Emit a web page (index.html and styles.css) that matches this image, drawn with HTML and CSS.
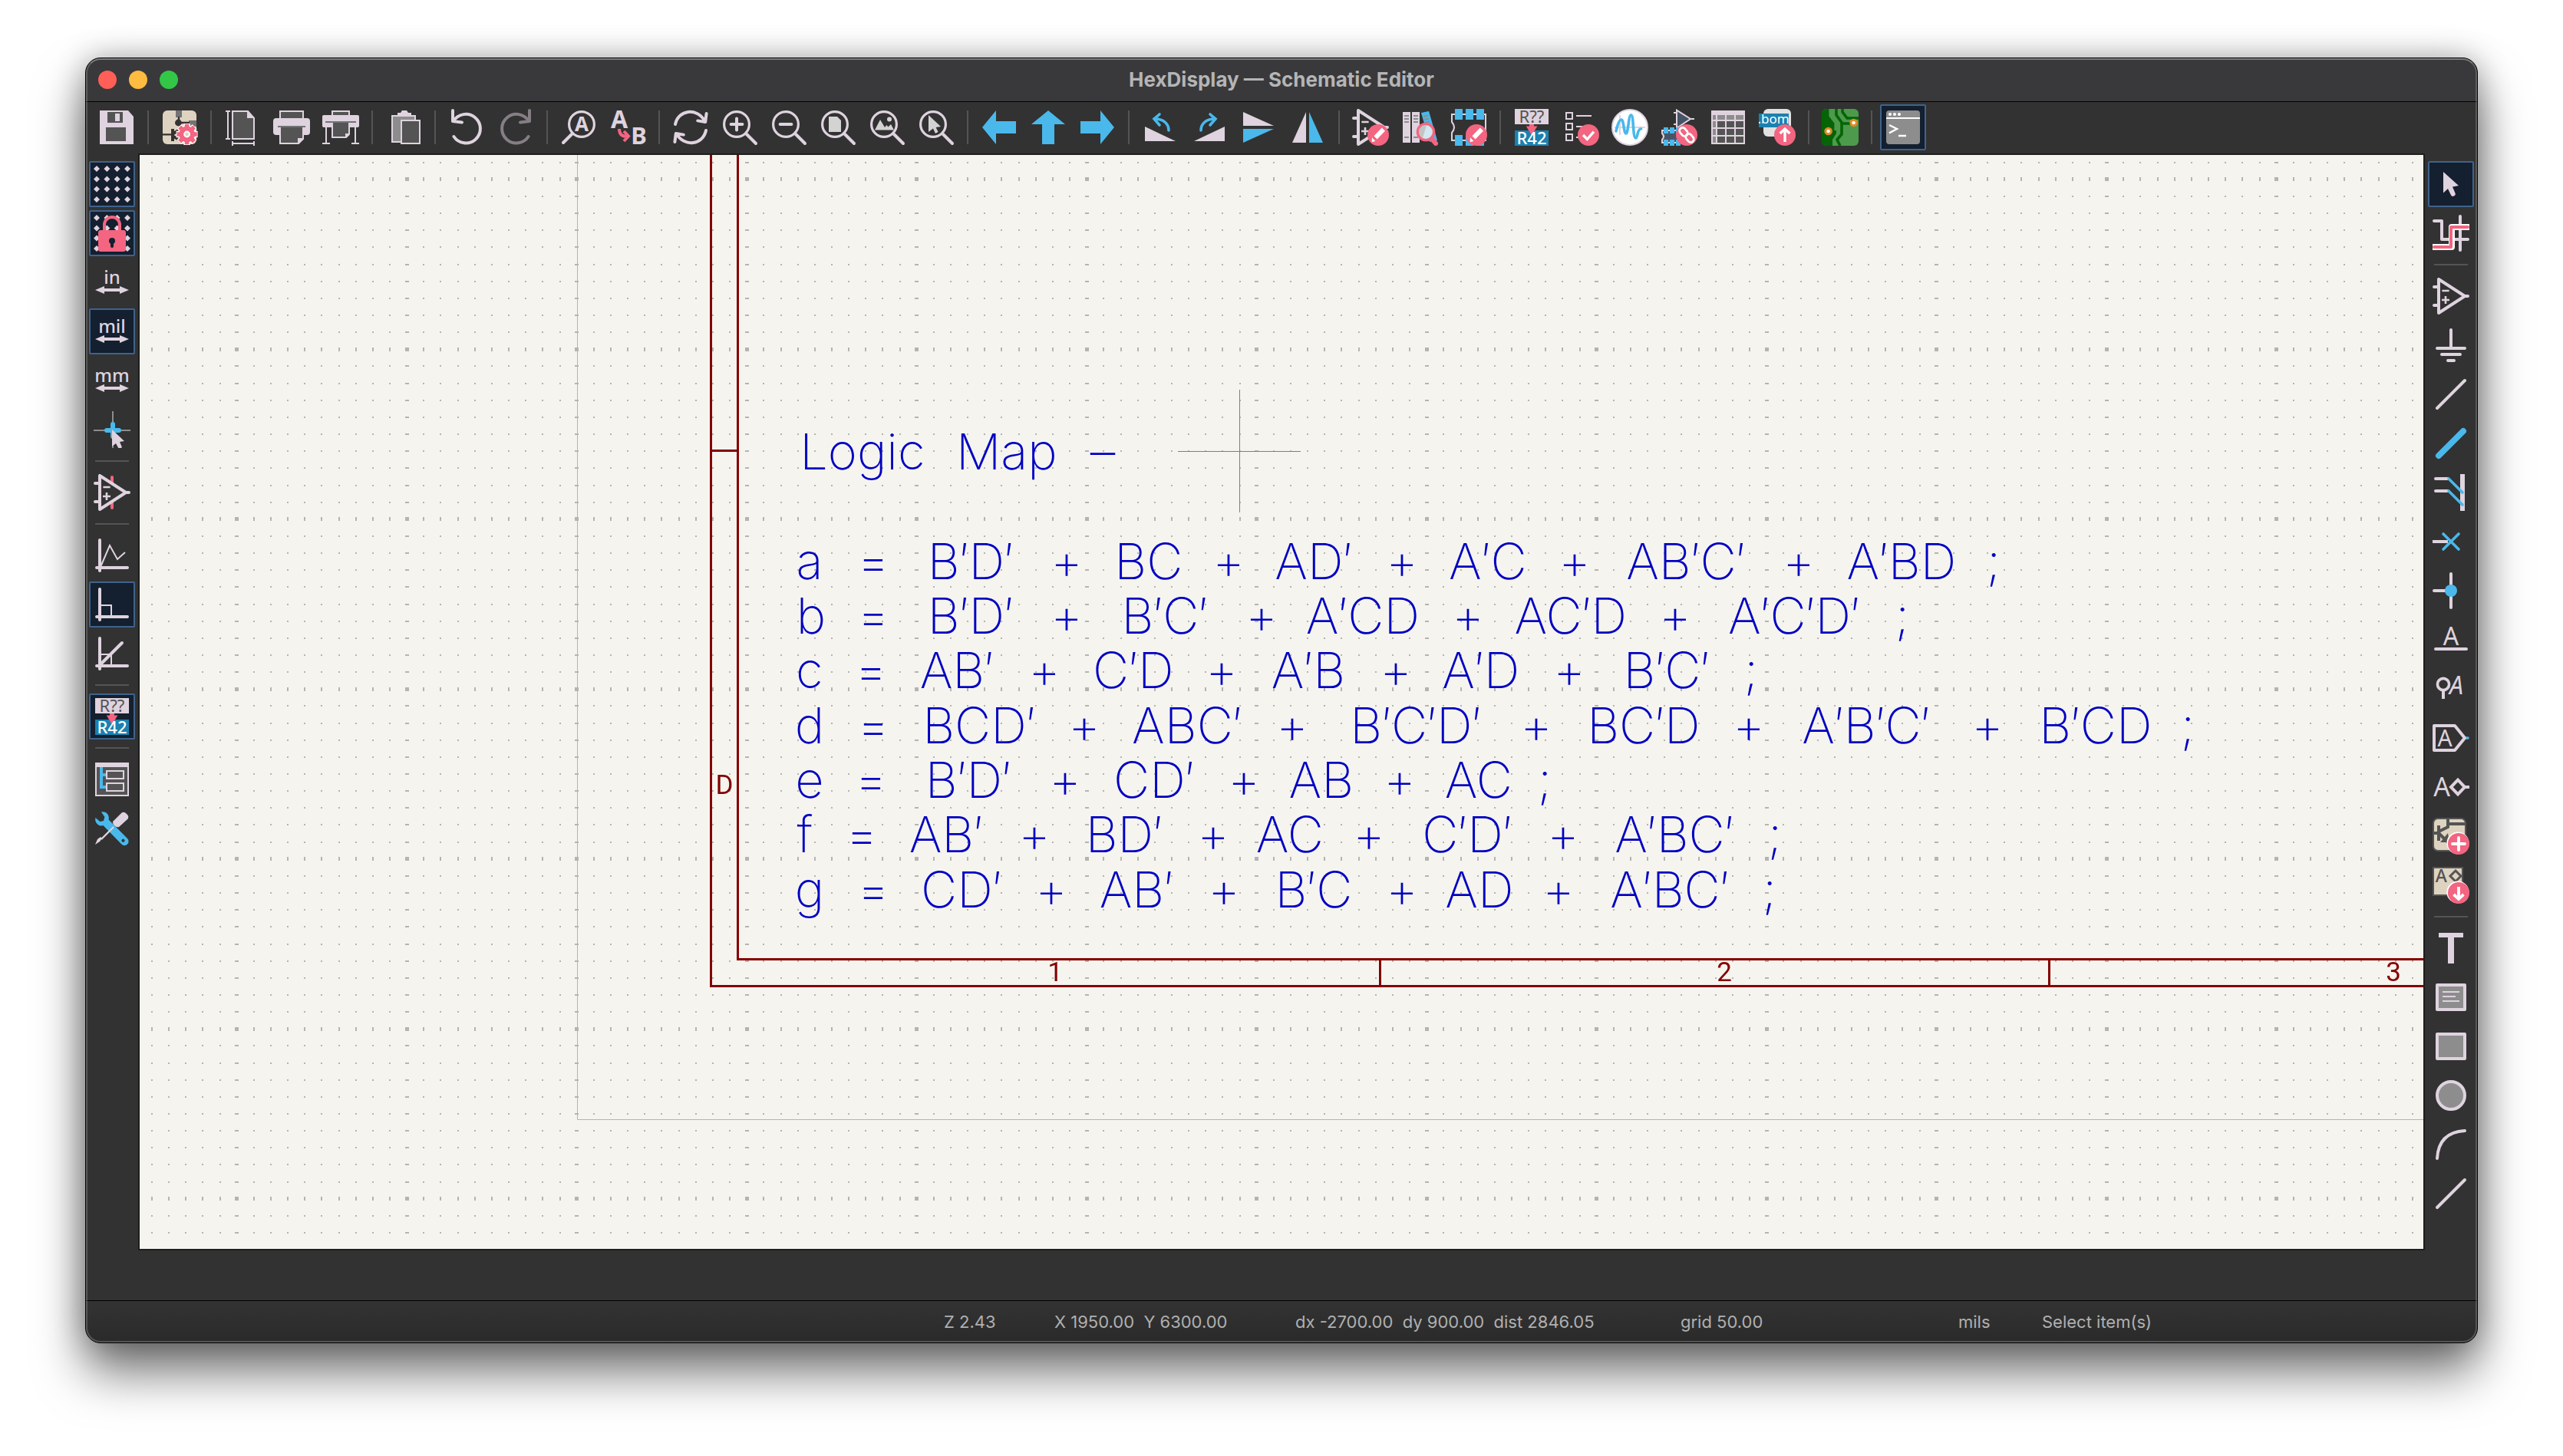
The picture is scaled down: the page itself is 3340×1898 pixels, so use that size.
FILE: index.html
```html
<!DOCTYPE html>
<html lang="en">
<head>
<meta charset="utf-8">
<title>HexDisplay — Schematic Editor</title>
<link rel="stylesheet" href="styles.css">
</head>
<body>
<svg class="sprites" aria-hidden="true">
  <symbol id="opamp" viewBox="0 0 24 24"><path class="s2" d="M4 1v22L21 12zM1 6h3M1 18h3M21 12h2"/><path class="s1" d="M6.2 8.5h4.6M6 14.5h5M8.5 12v5" stroke-width="1.3"/></symbol>
  <symbol id="badge" viewBox="0 0 24 24"><circle class="pink" cx="17" cy="17" r="7"/></symbol>
  <symbol id="edit" viewBox="0 0 24 24"><use href="#badge"/><path fill="#fff" d="M14.2 17.6l5.2-5.3 2.1 2.1-5.2 5.4zM13 18.6l2.2 2.4-2.4.6z"/></symbol>
  <symbol id="lens" viewBox="0 0 24 24"><circle class="s1" cx="10" cy="10" r="8.2" stroke-width="1.6"/><path class="s2" d="M16.5 16.5l6 6"/></symbol>
  <symbol id="annotate" viewBox="0 0 24 24"><path class="lt" d="M1 0h22v10H1z"/><path class="teal" d="M1 14h22v10H1z"/><text class="g dk" x="12" y="9.2" font-size="11" text-anchor="middle">R??</text><path class="pink" d="M10.5 10h3v1.2h2.2L12 17.2 8.400 11.200h2.100z"/><text class="g wh semi" x="12" y="23" font-size="11" text-anchor="middle">R42</text></symbol>
  <symbol id="wire" viewBox="0 0 24 24"><path class="s2" d="M3 21L21 3"/></symbol>
  <symbol id="cursor" viewBox="0 0 24 24"><path class="lt" d="M7 4l10 9-4 .8 1.700 3.900a1.500 1.500 0 0 1-2.800 1.300L10 15l-3 2.700z"/></symbol>
  <symbol id="axes" viewBox="0 0 24 24"><path class="s2" d="M4 2v20M2 20h20"/></symbol>
  <symbol id="dots" viewBox="0 0 24 24"><path class="lt" d="M2 0l2 2-2 2-2-2zM8.700 0l2 2-2 2-2-2zM15.300 0l2 2-2 2-2-2zM22 0l2 2-2 2-2-2zM2 6.700l2 2-2 2-2-2zM8.700 6.700l2 2-2 2-2-2zM15.300 6.700l2 2-2 2-2-2zM22 6.700l2 2-2 2-2-2zM2 13.300l2 2-2 2-2-2zM8.700 13.300l2 2-2 2-2-2zM15.300 13.300l2 2-2 2-2-2zM22 13.300l2 2-2 2-2-2zM2 20l2 2-2 2-2-2zM8.700 20l2 2-2 2-2-2zM15.300 20l2 2-2 2-2-2zM22 20l2 2-2 2-2-2z"/></symbol>
  <symbol id="units" viewBox="0 0 24 24"><path class="lt" d="M1 17l6-2.500V16h10v-1.500l6 2.500-6 2.500V18H7v1.500z"/></symbol>
</svg>

<main class="window">
  <header class="titlebar">
    <div class="lights"><button class="light close" aria-label="Close"></button><button class="light minimise" aria-label="Minimise"></button><button class="light zoom" aria-label="Zoom"></button></div>
    <h1>HexDisplay — Schematic Editor</h1>
  </header>

  <nav class="toolbar top" aria-label="Main toolbar">
    <button aria-label="Save"><svg viewBox="0 0 24 24"><path class="lt" d="M1 1h18.500L23 5v18H1z"/><path class="dkf" d="M6 2h10v7H6zM5 12h13v9H5z"/><path class="lt" d="M11 3h3v5h-3z"/></svg></button>
    <span class="sep"></span>
    <button aria-label="Schematic setup"><svg viewBox="0 0 24 24"><rect class="tan" x="1" y="1" width="22" height="22" rx="3"/><path fill="#737373" d="M9.500 1h4v4.500h-4zM18 7.500h5v4h-5z"/><path d="M11.500 5v4M11.500 9h7M1 16.700h6" stroke="#333" stroke-width="1.200"/><circle cx="11.200" cy="9" r="2.200" fill="#333"/><path d="M7.500 13v8M8 16l5-3M8 18l4 2" stroke="#333" stroke-width="2"/><g transform="translate(16.800 16.500)"><path d="M0-7V7M-7 0H7M-5-5L5 5M5-5L-5 5" stroke="#fff" stroke-width="4.200"/><circle r="5.900" fill="#fff"/><path d="M0-6.600V6.600M-6.600 0H6.600M-4.700-4.700L4.700 4.700M4.700-4.700L-4.700 4.700" stroke="#f36580" stroke-width="2.800"/><circle r="5.200" fill="#f36580"/><circle r="1.700" fill="#ded3c0" stroke="#fff"/></g></svg></button>
    <span class="sep"></span>
    <button aria-label="Page settings"><svg viewBox="0 0 24 24"><path class="box" d="M5.500 1.500h10l4 4.500v13.500h-14z"/><path class="lt" d="M15 1l5 5h-5zM1 1h3v1H3v17h1v1H1v-1h1V2H1zM5 21h1v1h13v-1h1v3h-1v-1H6v1H5z"/></svg></button>
    <button aria-label="Print"><svg viewBox="0 0 24 24"><path class="box" d="M4.500 1.500h15v6h-15z"/><rect class="lt" y="6" width="24" height="11" rx="2"/><path class="box" d="M4.500 11.500h15v8l-3 3h-12z"/><path fill="#737373" d="M3 11h18v1H3z"/><path class="lt" d="M16 23v-4h4z"/></svg></button>
    <button aria-label="Plot"><svg viewBox="0 0 24 24"><path class="box" d="M6.500 1.500h11v4h-11z"/><rect class="lt" y="4" width="24" height="8" rx="1"/><path class="box" d="M6.500 8.500h11v8l-2 2h-9z"/><path fill="#737373" d="M2 8h20v1H2z"/><path class="lt" d="M15 19v-3h3zM2 12h1v10h2v1H0v-1h2zM21 12h1v10h2v1h-5v-1h2z"/></svg></button>
    <span class="sep"></span>
    <button aria-label="Paste"><svg viewBox="0 0 24 24"><path class="box gray" d="M4.500 4.500h15v17h-15z"/><path class="lt" d="M8 4V2.500h2L11 1h3l1 1.500h2V4z"/><path class="box" d="M10.500 7.500h12v15h-12z"/></svg></button>
    <span class="sep"></span>
    <button aria-label="Undo"><svg viewBox="0 0 24 24"><path class="s2" stroke-width="1.800" d="M3.700 18A9.400 9.400 0 1 0 3.500 8M3 1v7l6 .7" /></svg></button>
    <button aria-label="Redo" disabled><svg viewBox="0 0 24 24"><path class="s2 off" d="M20.300 18A9.400 9.400 0 1 1 20.500 8M21 1v7l-6 .7"/></svg></button>
    <span class="sep"></span>
    <button aria-label="Find"><svg viewBox="0 0 24 24"><circle class="s1" cx="14" cy="10" r="8.200" stroke-width="1.600"/><path class="s2" d="M8 16l-6 6"/><text class="g ltt bold" x="14" y="14.500" font-size="13" text-anchor="middle">A</text></svg></button>
    <button aria-label="Find and replace"><svg viewBox="0 0 24 24"><text class="g ltt bold" x="6.500" y="12.500" font-size="16" text-anchor="middle">A</text><text class="g ltt bold" x="19.300" y="23" font-size="15.500" text-anchor="middle">B</text><path d="M6.500 13q0 5 5 5M9.500 14.500l3 3.300-3 3.200" fill="none" stroke="#f36580" stroke-width="2"/></svg></button>
    <span class="sep"></span>
    <button aria-label="Refresh"><svg viewBox="0 0 24 24"><path class="s2" stroke-width="1.800" d="M2 10C4 .500 16-1 21 7.500M22.300 3l-.700 5.500-5-.800M22 14c-2 9.500-14 11-19 2.500M1.700 21.500l.700-5.500 5 .800"/></svg></button>
    <button aria-label="Zoom in"><svg viewBox="0 0 24 24"><use href="#lens"/><path class="s2" d="M10 6.300v7.400M6.300 10h7.400"/></svg></button>
    <button aria-label="Zoom out"><svg viewBox="0 0 24 24"><use href="#lens"/><path class="s2" d="M6.300 10h7.400"/></svg></button>
    <button aria-label="Zoom to page"><svg viewBox="0 0 24 24"><use href="#lens"/><path fill="#d3d3d3" d="M6 5h5.500L14 7.500V15H6z"/></svg></button>
    <button aria-label="Zoom to objects"><svg viewBox="0 0 24 24"><use href="#lens"/><path fill="#d3d3d3" d="M4 13.700L7.500 7l3 5 1.200-1.500 1 1.200 1.800-1.700 2 3.700z"/><circle cx="13.500" cy="6.700" r="1.500" fill="#d3d3d3"/></svg></button>
    <button aria-label="Zoom to selection"><svg viewBox="0 0 24 24"><use href="#lens"/><path fill="#d3d3d3" d="M7 4l8 7.500-3.200.5 1.500 3-1.800 1L10 12.700 7 15z"/></svg></button>
    <span class="sep"></span>
    <button aria-label="Navigate back"><svg viewBox="0 0 24 24"><path class="blue" d="M1 12l9-11v7h13v8H10v7z"/></svg></button>
    <button aria-label="Navigate up"><svg viewBox="0 0 24 24"><path class="blue" d="M12 1l11 9h-7v13H8V10H1z"/></svg></button>
    <button aria-label="Navigate forward"><svg viewBox="0 0 24 24"><path class="blue" d="M23 12L14 1v7H1v8h13v7z"/></svg></button>
    <span class="sep"></span>
    <button aria-label="Rotate counter-clockwise"><svg viewBox="0 0 24 24"><path class="lt" d="M2 11.500L22 21H2z"/><path class="b2" d="M17.500 14c0-4-3-7.500-9-7.500M11.500 3.500l-3.500 3 3.500 4"/></svg></button>
    <button aria-label="Rotate clockwise"><svg viewBox="0 0 24 24"><path class="lt" d="M22 11.500L2 21h20z"/><path class="b2" d="M6.500 14c0-4 3-7.500 9-7.500M12.500 3.500l3.500 3-3.500 4"/></svg></button>
    <button aria-label="Mirror vertically"><svg viewBox="0 0 24 24"><path class="lt" d="M2 2l20 9H2z"/><path class="blue" d="M2 13h20L2 22z"/></svg></button>
    <button aria-label="Mirror horizontally"><svg viewBox="0 0 24 24"><path class="lt" d="M11 2v20H2z"/><path class="blue" d="M13 2v20h9z"/></svg></button>
    <span class="sep"></span>
    <button aria-label="Symbol editor"><svg viewBox="0 0 24 24"><use href="#opamp"/><use href="#edit"/></svg></button>
    <button aria-label="Symbol library browser"><svg viewBox="0 0 24 24"><path class="lt" d="M1 2h5v20H1zM7 2h5v20H7z"/><path class="blue" d="M13 2.500l5-1 5.500 19-5 1z"/><path d="M2 4.500h3M2 6.500h3M2 8.500h3M2 18.500h3M8 4.500h3M8 6.500h3M8 8.500h3M8 18.500h3M14.500 5l3-.8M15 7l3-.8M15.500 9l3-.8" stroke="#8d8d8d"/><circle cx="16" cy="15" r="5.300" fill="#d0e8f2" stroke="#f36580" stroke-width="1.700"/><path fill="#c4c4c4" d="M16.500 10.600a4.400 4.400 0 0 0-2.500 8.300z"/><path d="M20 19.500l2.500 3" stroke="#f36580" stroke-width="3" stroke-linecap="round"/></svg></button>
    <button aria-label="Footprint editor"><svg viewBox="0 0 24 24"><path class="s1" d="M1 3.500h22v17H1v-5q3-3.500 0-7z"/><path class="blue" d="M3 0h5v7H3zM10 0h5v7h-5zM17 0h5v7h-5zM3 17h5v7H3zM10 17h5v7h-5zM17 17h5v7h-5z"/><use href="#edit"/></svg></button>
    <span class="sep"></span>
    <button aria-label="Annotate"><svg viewBox="0 0 24 24"><use href="#annotate"/></svg></button>
    <button aria-label="Electrical rules checker"><svg viewBox="0 0 24 24"><path class="s1" d="M2.500 2.500h4v4h-4zM2.500 9.500h4v4h-4zM2.500 16.500h4v4h-4zM9 4.500h10M9 11.500h9M9 18.500h5"/><use href="#badge"/><path d="M13.500 17l2.700 2.800 4.300-5" fill="none" stroke="#fff" stroke-width="1.700"/></svg></button>
    <button aria-label="Simulator"><svg viewBox="0 0 24 24"><circle cx="12" cy="12" r="11.500" fill="#fff" stroke="#ded3de"/><path d="M5.500 4v13M2 12h20" stroke="#ded3de"/><path class="b2" stroke-width="1.300" d="M3 14.500C4 10 5 7 6.500 7s1.500 9 3 9S11 4 12.800 4s1 15 3 15c1.500 0 .7-6 3.500-6"/></svg></button>
    <button aria-label="Assign footprints"><svg viewBox="0 0 24 24"><path d="M10.500.8v11.700L19.500 6.500zM8.500 2.500h2M8.500 10h2M19 6.500h3" fill="#475468" stroke="#ded3de"/><path d="M1 14h12v8H1v-2q2-2 0-4z" fill="#475468" stroke="#ded3de"/><path class="blue" d="M2 12h3v4H2zM6 12h3v4H6zM10 12h3v4h-3zM2 20h3v4H2zM6 20h3v4H6zM10 20h3v4h-3z"/><use href="#badge"/><g fill="none" stroke="#fff" stroke-width="1.400"><rect x="13" y="12" width="4" height="6" rx="2" transform="rotate(-40 15 15)"/><rect x="17" y="16" width="4" height="6" rx="2" transform="rotate(-40 19 19)"/></g></svg></button>
    <button aria-label="Symbol fields table"><svg viewBox="0 0 24 24"><path class="lt" d="M1 1h22v22H1z"/><path fill="#8d8d8d" d="M2 4h2v3H2zM5 4h5v3H5zM11 4h5v3h-5zM17 4h5v3h-5zM2 8h2v4H2zM2 13h2v4H2zM2 18h2v4H2z"/><path class="dkf" d="M5 8h5v4H5zM11 8h5v4h-5zM17 8h5v4h-5zM5 13h5v4H5zM11 13h5v4h-5zM17 13h5v4h-5zM5 18h5v4H5zM11 18h5v4h-5zM17 18h5v4h-5z"/></svg></button>
    <button aria-label="Generate bill of materials"><svg viewBox="0 0 24 24"><rect x="3" width="18" height="18" rx="3" fill="#e1e1e1"/><path class="teal" d="M0 3h19.500v9H0z"/><text class="g wh" x="9.500" y="9.700" font-size="8.500" text-anchor="middle">.bom</text><use href="#badge"/><path d="M17 21.500v-8M13.800 16l3.200-3 3.200 3" fill="none" stroke="#fff" stroke-width="1.700"/></svg></button>
    <span class="sep"></span>
    <button aria-label="Open PCB editor"><svg viewBox="0 0 24 24"><rect width="24" height="24" rx="3" fill="#4d9a4d"/><path fill="#056405" d="M3 0h2.500v5l4 5v6L7 20v4H3q-3 0-3-3V3q0-3 3-3z"/><path d="M9.500 0v4l4 5.500h7M13.500 0v2l3 4H24M12 24l-2-4 3-3.500V9" fill="none" stroke="#056405" stroke-width="1.800"/><path d="M5.500 0v4.500L9 9v5" fill="none" stroke="#4d9a4d" stroke-width="1.600"/><g fill="#fff" stroke="#df8b28" stroke-width="1.500"><circle cx="4.300" cy="14.500" r="1.900"/><circle cx="20.800" cy="9" r="1.900"/></g></svg></button>
    <span class="sep"></span>
    <button class="on" aria-label="Scripting console"><svg viewBox="0 0 24 24"><rect x="1" y="1" width="22" height="22" rx="2" fill="#8d8d8d"/><path fill="#fff" d="M1 5.500h22v1H1z"/><g fill="#fff"><circle cx="3.500" cy="3.500" r="1"/><circle cx="6.500" cy="3.500" r="1"/><circle cx="9.500" cy="3.500" r="1"/></g><path d="M3 10.500l5 2.500-5 2.700M9 17.500h5" fill="none" stroke="#fff" stroke-width="1.200"/></svg></button>
  </nav>

  <div class="work">
    <nav class="toolbar side" aria-label="Options toolbar">
      <button class="on" aria-label="Show grid"><svg viewBox="0 0 24 24"><use href="#dots"/></svg></button>
      <button class="on" aria-label="Grid overrides"><svg viewBox="0 0 24 24"><use href="#dots"/><path d="M7 11V6.500a5 5 0 0 1 10 0V11" fill="none" stroke="#f36580" stroke-width="2"/><rect class="pink" x="3" y="10" width="18" height="14" rx="1.500"/><circle cx="12" cy="17" r="2" fill="#141f2f"/><path d="M12 18v2.500" stroke="#141f2f" stroke-width="2" stroke-linecap="round"/></svg></button>
      <button aria-label="Inches"><svg viewBox="0 0 24 24"><text class="g ltt semi" x="12" y="13" font-size="12" text-anchor="middle">in</text><use href="#units"/></svg></button>
      <button class="on" aria-label="Mils"><svg viewBox="0 0 24 24"><text class="g ltt semi" x="12" y="13" font-size="12" text-anchor="middle">mil</text><use href="#units"/></svg></button>
      <button aria-label="Millimetres"><svg viewBox="0 0 24 24"><text class="g ltt semi" x="12" y="13" font-size="12" text-anchor="middle">mm</text><use href="#units"/></svg></button>
      <button aria-label="Full-window crosshair"><svg viewBox="0 0 24 24"><path d="M12.500 0v24M0 12.500h24" stroke="#8d8d8d"/><path d="M12.500 8.500v8M8.500 12.500h8" stroke="#4ab8eb" stroke-width="3" stroke-linecap="round"/><path class="lt" d="M12 12l8 7.500-3 .5 1.200 2.700a1.200 1.200 0 0 1-2.200 1L14.500 21 12 23z"/></svg></button>
      <span class="sep"></span>
      <button aria-label="Show hidden pins"><svg viewBox="0 0 24 24"><path d="M12 2v20" stroke="#f36580" stroke-width="2" stroke-linecap="round"/><path d="M4 1l17 11L4 23z" fill="#333"/><use href="#opamp"/></svg></button>
      <span class="sep"></span>
      <button aria-label="Free angle lines"><svg viewBox="0 0 24 24"><use href="#axes"/><path class="s1" d="M4.500 19.500l6-14 5 9L20.500 10"/></svg></button>
      <button class="on" aria-label="Right angle lines"><svg viewBox="0 0 24 24"><path class="s1" d="M4 12.500h7.500V20"/><use href="#axes"/></svg></button>
      <button aria-label="45 degree lines"><svg viewBox="0 0 24 24"><path class="s1" d="M4 12.500h7.500V20"/><use href="#axes"/><path class="s2" d="M4.500 19L18.500 5"/></svg></button>
      <span class="sep"></span>
      <button class="on" aria-label="Annotate automatically"><svg viewBox="0 0 24 24"><use href="#annotate"/></svg></button>
      <span class="sep"></span>
      <button aria-label="Hierarchy navigator"><svg viewBox="0 0 24 24"><path class="box" d="M1.500 1.500h21v21h-21z"/><path class="lt" d="M1 1h22v3H1z"/><path d="M5 4v14M4 9h4M4 17h4" stroke="#4ab8eb" stroke-width="2"/><path class="box" d="M8.500 6.500h11v5h-11zM8.500 14.500h11v5h-11z"/></svg></button>
      <button aria-label="Properties"><svg viewBox="0 0 24 24"><path class="blue" fill-rule="evenodd" d="M5 1.200C8 .5 10.500 3 9.800 6.200L22 18.500a2.600 2.600 0 0 1-3.800 3.800L6.200 10C3 11 .5 8 1.200 5l3 2.500L6.500 7l.7-2.500zM20 20.500a1 1 0 1 0-1.500 0 1 1 0 0 0 1.500 0z"/><path d="M13 11L5 19" stroke="#ded3de" stroke-width="1.200"/><path class="lt" d="M1 22.500l1.500-3.500 2-1.500 1 1-1.500 2zM12.500 7.500l5.800-5.800q1.700-1 3.200.8 1.800 1.500.8 3.200l-5.800 5.300q-1.500.5-2.800-.7-1.400-1.300-1.200-2.800z"/></svg></button>
    </nav>

    <section class="sheet" aria-label="Schematic">
      <canvas class="grid"></canvas>
      <svg class="drawing">
        <path class="edge" d="M570.500 0v1257.500h9000"/>
        <path class="frame" d="M744.500 0v1083.500h9000M779.500 0v1048.500h9000M744.500 385.500h35M1616.500 1048.500v35M2488.500 1048.500v35"/>
        <g class="zone"><text x="762" y="833">D</text><text x="1193" y="1077">1</text><text x="2065" y="1077">2</text><text x="2937" y="1077">3</text></g>
        <g class="note">
          <text y="410"><tspan x="951">Logic</tspan> <tspan x="1139">Map</tspan> <tspan x="1255">–</tspan></text>
          <text y="553"><tspan x="882">a</tspan> <tspan x="965">=</tspan> <tspan x="1092">B′D′</tspan> <tspan x="1217">+</tspan> <tspan x="1324">BC</tspan> <tspan x="1428">+</tspan> <tspan x="1539">AD′</tspan> <tspan x="1654">+</tspan> <tspan x="1766">A′C</tspan> <tspan x="1879">+</tspan> <tspan x="2024">AB′C′</tspan> <tspan x="2171">+</tspan> <tspan x="2305">A′BD</tspan> <tspan x="2416">;</tspan></text>
          <text y="624"><tspan x="884">b</tspan> <tspan x="965">=</tspan> <tspan x="1092">B′D′</tspan> <tspan x="1217">+</tspan> <tspan x="1345">B′C′</tspan> <tspan x="1471">+</tspan> <tspan x="1603">A′CD</tspan> <tspan x="1740">+</tspan> <tspan x="1874">AC′D</tspan> <tspan x="2010">+</tspan> <tspan x="2165">A′C′D′</tspan> <tspan x="2297">;</tspan></text>
          <text y="695"><tspan x="882">c</tspan> <tspan x="962">=</tspan> <tspan x="1074">AB′</tspan> <tspan x="1188">+</tspan> <tspan x="1304">C′D</tspan> <tspan x="1419">+</tspan> <tspan x="1532">A′B</tspan> <tspan x="1646">+</tspan> <tspan x="1757">A′D</tspan> <tspan x="1872">+</tspan> <tspan x="1999">B′C′</tspan> <tspan x="2100">;</tspan></text>
          <text y="767"><tspan x="882">d</tspan> <tspan x="965">=</tspan> <tspan x="1103">BCD′</tspan> <tspan x="1240">+</tspan> <tspan x="1374">ABC′</tspan> <tspan x="1511">+</tspan> <tspan x="1672">B′C′D′</tspan> <tspan x="1829">+</tspan> <tspan x="1969">BC′D</tspan> <tspan x="2106">+</tspan> <tspan x="2259">A′B′C′</tspan> <tspan x="2417">+</tspan> <tspan x="2558">B′CD</tspan> <tspan x="2669">;</tspan></text>
          <text y="838"><tspan x="882">e</tspan> <tspan x="962">=</tspan> <tspan x="1089">B′D′</tspan> <tspan x="1215">+</tspan> <tspan x="1331">CD′</tspan> <tspan x="1448">+</tspan> <tspan x="1549">AB</tspan> <tspan x="1651">+</tspan> <tspan x="1754">AC</tspan> <tspan x="1831">;</tspan></text>
          <text y="909"><tspan x="876">f</tspan> <tspan x="950">=</tspan> <tspan x="1060">AB′</tspan> <tspan x="1175">+</tspan> <tspan x="1292">BD′</tspan> <tspan x="1408">+</tspan> <tspan x="1508">AC</tspan> <tspan x="1611">+</tspan> <tspan x="1739">C′D′</tspan> <tspan x="1864">+</tspan> <tspan x="2009">A′BC′</tspan> <tspan x="2131">;</tspan></text>
          <text y="981"><tspan x="882">g</tspan> <tspan x="965">=</tspan> <tspan x="1080">CD′</tspan> <tspan x="1197">+</tspan> <tspan x="1308">AB′</tspan> <tspan x="1422">+</tspan> <tspan x="1539">B′C</tspan> <tspan x="1654">+</tspan> <tspan x="1755">AD</tspan> <tspan x="1858">+</tspan> <tspan x="2003">A′BC′</tspan> <tspan x="2124">;</tspan></text>
        </g>
        <path class="crosshair" d="M1433.500 306v160M1353 386.500h160"/>
      </svg>
    </section>

    <nav class="toolbar side" aria-label="Drawing toolbar">
      <button class="on" aria-label="Select"><svg viewBox="0 0 24 24"><use href="#cursor"/></svg></button>
      <button aria-label="Highlight net"><svg viewBox="0 0 24 24"><path class="s2" d="M1 4h5v12h17M18 1v22"/><path d="M0 21h12.500V8H24" fill="none" stroke="#fff" stroke-width="4" stroke-linejoin="round"/><path d="M1 21h11V8h11" fill="none" stroke="#f36580" stroke-width="2" stroke-linecap="round" stroke-linejoin="round"/></svg></button>
      <span class="sep"></span>
      <button aria-label="Place symbols"><svg viewBox="0 0 24 24"><use href="#opamp"/></svg></button>
      <button aria-label="Place power"><svg viewBox="0 0 24 24"><path class="s2" d="M12 2v12M3 14h18M6 18h12M10 22h4"/></svg></button>
      <button aria-label="Draw wires"><svg viewBox="0 0 24 24"><use href="#wire"/></svg></button>
      <button aria-label="Draw buses"><svg viewBox="0 0 24 24"><path d="M4 20L20 4" stroke="#4ab8eb" stroke-width="4" stroke-linecap="round"/></svg></button>
      <button aria-label="Bus entries"><svg viewBox="0 0 24 24"><path class="s2" d="M2 3h8M2 11h8"/><path class="lt" d="M18 0h3v24h-3z"/><path class="b2" d="M10.500 3l9 9M10.500 11l9 9"/></svg></button>
      <button aria-label="No-connect flags"><svg viewBox="0 0 24 24"><path class="s2 flat" d="M0 12h10"/><path class="b2" d="M7 7l10 10M17 7L7 17"/></svg></button>
      <button aria-label="Junctions"><svg viewBox="0 0 24 24"><path class="s2" d="M12 1v22M1 12h11"/><circle class="blue" cx="12" cy="12" r="4"/></svg></button>
      <button aria-label="Net labels"><svg viewBox="0 0 24 24"><text class="g ltt" x="12" y="15.500" font-size="16" text-anchor="middle">A</text><path class="s2" d="M2 18h20"/></svg></button>
      <button aria-label="Net class directives"><svg viewBox="0 0 24 24"><circle class="s1" cx="7" cy="9" r="3.800" stroke-width="1.800"/><path class="s2 flat" d="M7 13v5.500"/><text class="g ltt italic" x="15.500" y="15.500" font-size="16" text-anchor="middle">A</text></svg></button>
      <button aria-label="Global labels"><svg viewBox="0 0 24 24"><path class="b2" d="M22 12h1"/><path class="s2" d="M1 4h13.500l6.500 8-6.500 8H1z"/><text class="g ltt" x="8" y="17.500" font-size="15" text-anchor="middle">A</text></svg></button>
      <button aria-label="Hierarchical labels"><svg viewBox="0 0 24 24"><text class="g ltt" x="6" y="18" font-size="17" text-anchor="middle">A</text><path class="s2 flat" d="M16.500 7.300l4.500 4.700-4.500 4.700L12 12zM21 12h3"/></svg></button>
      <button aria-label="Hierarchical sheets"><svg viewBox="0 0 24 24"><rect class="tan" x=".5" y=".5" width="21" height="21" rx="3" stroke="#545454"/><path d="M0 10h4M4 5v10M4 9l6-3V0M10 4h11M4 10l6 6" fill="none" stroke="#545454" stroke-width="2"/><path fill="#545454" d="M5 16h6l-1-6z"/><circle cx="16.500" cy="16.500" r="7.300" fill="#fff"/><use href="#badge"/><path d="M17 13v8M13 17h8" stroke="#fff" stroke-width="1.900" stroke-linecap="round"/></svg></button>
      <button aria-label="Import sheet pins"><svg viewBox="0 0 24 24"><path class="tan" d="M.5.500h19v18H.5z" stroke="#545454"/><text class="g dk semi" x="5.700" y="10" font-size="11.500" text-anchor="middle">A</text><path d="M15 2.500L18.500 6 15 9.500 11.500 6z" fill="none" stroke="#545454" stroke-width="1.500"/><circle cx="16.500" cy="16.500" r="7.300" fill="#fff"/><use href="#badge"/><path d="M17 13v7.500M13.800 18l3.200 3 3.200-3" fill="none" stroke="#fff" stroke-width="1.900"/></svg></button>
      <span class="sep"></span>
      <button aria-label="Text"><svg viewBox="0 0 24 24"><rect class="lt" x="4" y="2" width="16" height="3"/><rect class="lt" x="10" y="2" width="4" height="20"/></svg></button>
      <button aria-label="Text boxes"><svg viewBox="0 0 24 24"><path class="s2 gray" d="M3 4h18v16H3z"/><path class="s1" d="M6.500 8.500h11M6.500 11.500h8.500M6.500 14.500h11"/></svg></button>
      <button aria-label="Rectangles"><svg viewBox="0 0 24 24"><path class="s2 gray" d="M3 4h18v16H3z"/></svg></button>
      <button aria-label="Circles"><svg viewBox="0 0 24 24"><circle class="s2 gray" cx="12" cy="12" r="9"/></svg></button>
      <button aria-label="Arcs"><svg viewBox="0 0 24 24"><path class="s2" d="M3 21Q4 4 21 3"/></svg></button>
      <button aria-label="Lines"><svg viewBox="0 0 24 24"><use href="#wire"/></svg></button>
    </nav>
  </div>

  <div class="messages"></div>
  <footer class="status"><span></span><span>Z 2.43</span><span>X 1950.00&nbsp; Y 6300.00</span><span>dx -2700.00&nbsp; dy 900.00&nbsp; dist 2846.05</span><span>grid 50.00</span><span>mils</span><span>Select item(s)</span></footer>
</main>
<script src="grid.js"></script>
</body>
</html>
```
FILE: styles.css
```css
*, *::before, *::after { box-sizing: border-box; }

body {
  margin: 0;
  min-height: 100vh;
  padding: 75px 111px 147px;
  display: flex;
  background: #fff;
  font-family: Inter, "Liberation Sans", sans-serif;
}

.sprites { position: absolute; width: 0; height: 0; }

.window {
  position: relative;
  flex: 1;
  min-width: 0;
  display: flex;
  flex-direction: column;
  overflow: hidden;
  border: 1px solid #000;
  border-radius: 20px;
  background: #323232;
  box-shadow: 0 38px 64px rgba(0, 0, 0, .54), 0 0 40px rgba(0, 0, 0, .3);
}
.window::after {
  content: "";
  position: absolute;
  inset: 0;
  border: 2px solid rgba(255, 255, 255, .2);
  border-top-color: rgba(255, 255, 255, .35);
  border-radius: 19px;
  pointer-events: none;
}

/* Title bar */
.titlebar {
  display: grid;
  grid-template-columns: 1fr auto 1fr;
  align-items: center;
  height: 57px;
  padding: 0 16px;
  background: #39393b;
  border-bottom: 1px solid #000;
}
.lights { display: flex; gap: 16px; }
.light { width: 24px; height: 24px; padding: 0; border: 0; border-radius: 50%; }
.close { background: #ff5f57; }
.minimise { background: #febc40; }
.zoom { background: #33c748; }
h1 { margin: 0; font-size: 26px; line-height: 32px; font-weight: 700; color: #b5b5b6; }

/* Toolbars */
.toolbar { display: flex; align-items: center; gap: 4px; }
.toolbar button {
  flex: none;
  width: 60px;
  height: 60px;
  padding: 4px;
  border: 2px solid transparent;
  border-radius: 2px;
  background: none;
}
.toolbar button.on { background: #141f2f; border-color: #3f638b; }
.toolbar button svg { display: block; width: 48px; height: 48px; }
.sep { flex: none; background: #545454; }
.top { padding: 3px 10px 4px; }
.top .sep { width: 2px; height: 44px; margin: 0 6px; }
.side { flex-direction: column; padding: 10px 4px; }
.side .sep { width: 44px; height: 2px; margin: 6px 0; }

/* Icon paints */
.lt { fill: #ded3de; }
.dkf { fill: #545454; }
.pink { fill: #f36580; }
.blue { fill: #4ab8eb; }
.teal { fill: #1a81b0; }
.tan { fill: #ded3c0; }
.box { fill: #545454; stroke: #ded3de; stroke-width: 1; }
.box.gray { fill: #8d8d8d; }
.s1 { fill: none; stroke: #ded3de; }
.s2 { fill: none; stroke: #ded3de; stroke-width: 2; stroke-linecap: round; stroke-linejoin: round; }
.s2.gray { fill: #8d8d8d; }
.s2.off { stroke: #857f85; }
.s2.flat { stroke-linecap: butt; stroke-linejoin: miter; }
.b2 { fill: none; stroke: #4ab8eb; stroke-width: 1.8; stroke-linecap: round; }
.g { font-family: "Noto Sans", sans-serif; }
.ltt { fill: #ded3de; }
.dk { fill: #545454; }
.wh { fill: #fff; }
.semi { font-weight: 500; }
.bold { font-weight: 700; }
.italic { font-style: italic; }

/* Drawing area */
.work { flex: 1; display: grid; grid-template-columns: 68px minmax(0, 1fr) 68px; }
.sheet { position: relative; overflow: hidden; border: 2px solid #1e1e1e; background: #f5f4ef; }
.grid, .drawing { position: absolute; inset: 0; width: 100%; height: 100%; }
.edge { fill: none; stroke: #b4b4b2; }
.frame { fill: none; stroke: #840000; stroke-width: 3; }
.crosshair { fill: none; stroke: #7f7f7f; }
.zone { font: 400 35px Roboto, sans-serif; fill: #840000; text-anchor: middle; }
.note { font: 200 65px Inter, sans-serif; fill: #0000c2; text-anchor: middle; }

/* Status */
.messages { height: 65px; }
.status {
  display: grid;
  grid-template-columns: 1118fr 144fr 314fr 502fr 362fr 109fr 567fr;
  align-items: center;
  height: 55px;
  border-top: 1px solid #000;
  background: linear-gradient(#333, #2a2a2a);
  font-size: 22px;
  line-height: 28px;
  color: #b0b0b0;
  white-space: nowrap;
}
```
FILE: grid.js
```js
// Paints the 50 mil grid; every tenth row and column is drawn heavier.
const PITCH = 22.15;
const ORIGIN = { x: 126.7, y: 31.8 };

function paintGrid() {
  const canvas = document.querySelector('.grid');
  const width = canvas.width = canvas.clientWidth;
  const height = canvas.height = canvas.clientHeight;
  const ctx = canvas.getContext('2d');
  ctx.fillStyle = '#b4b4b2';
  for (let i = -5; ORIGIN.x + i * PITCH < width; i++) {
    const w = i % 10 === 0 ? 5 : 2;
    const x = Math.round(ORIGIN.x + i * PITCH - w / 2);
    for (let j = -1; ORIGIN.y + j * PITCH < height; j++) {
      const h = j % 10 === 0 ? 5 : 2;
      ctx.fillRect(x, Math.round(ORIGIN.y + j * PITCH - h / 2), w, h);
    }
  }
}

paintGrid();
window.addEventListener('resize', paintGrid);
```
